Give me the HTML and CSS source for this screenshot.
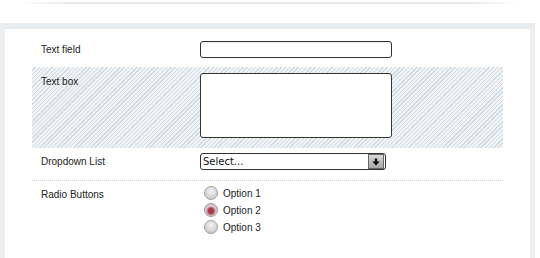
FILE: index.html
```html
<!DOCTYPE html>
<html>
<head>
<meta charset="utf-8">
<link rel="stylesheet" href="styles.css">
</head>
<body>
<div class="topline"></div>
<div class="panel">
  <form class="form">
    <div class="row row-first">
      <label class="lbl">Text field</label>
      <div class="ctl"><span class="input"></span></div>
    </div>
    <div class="row row-striped">
      <label class="lbl">Text box</label>
      <div class="ctl"><span class="textarea"></span></div>
    </div>
    <div class="row row-select">
      <label class="lbl">Dropdown List</label>
      <div class="ctl">
        <div class="select">
          <span class="select-text">Select...</span>
          <span class="select-btn">
            <svg width="10" height="10" viewBox="0 0 10 10"><path d="M3.8 1.5h2.4v3h2.6l-3.8 4l-3.8-4h2.6z" fill="#111"/></svg>
          </span>
        </div>
      </div>
    </div>
    <div class="row row-radio">
      <label class="lbl">Radio Buttons</label>
      <div class="ctl radios">
        <div class="opt"><span class="radio"></span><span>Option 1</span></div>
        <div class="opt"><span class="radio checked"></span><span>Option 2</span></div>
        <div class="opt"><span class="radio"></span><span>Option 3</span></div>
      </div>
    </div>
  </form>
</div>
</body>
</html>
```
FILE: styles.css
```css
html, body {
  margin: 0;
  padding: 0;
  background: #fff;
  font-family: "Liberation Sans", Arial, sans-serif;
  color: #222;
  overflow: hidden;
}
.topline {
  height: 2px;
  margin: 2px 20px 0 20px;
  background: linear-gradient(to right, rgba(230,232,235,0), #e6e8eb 10%, #e6e8eb 90%, rgba(230,232,235,0));
}
.panel {
  margin-top: 19px;
  width: 525px;
  height: 223px;
  border-style: solid;
  border-color: #e8ecef #edf0f2 #edf0f2 #edf0f2;
  border-width: 6px 5px 6px 5px;
  background: #fff;
  padding-top: 6px;
}
.form {
  margin-left: 27px;
  width: 471px;
}
.row {
  display: grid;
  grid-template-columns: 159px 1fr;
  padding: 6px 9px 10px 9px;
}
.row-first {
  padding-bottom: 9px;
}
.row-striped {
  background: repeating-linear-gradient(135deg, #f0f2f5 0 2px, #d5dbe2 2px 3px);
}
.row-select {
  padding-top: 5px;
  border-bottom: 1px dotted #cfd3d8;
}
.row-radio {
  padding-top: 5px;
}
.lbl {
  font-size: 10px;
  line-height: 13px;
  padding-top: 2px;
  color: #222;
}
.input {
  display: block;
  width: 190px;
  height: 15px;
  border: 1px solid #333;
  border-radius: 3px;
  background: #fff;
  box-shadow: inset 0 1px 1px rgba(0,0,0,0.08);
}
.textarea {
  display: block;
  width: 190px;
  height: 63px;
  border: 1px solid #333;
  border-radius: 3px;
  background: #fff;
}
.select {
  display: flex;
  align-items: center;
  justify-content: space-between;
  width: 184px;
  height: 15px;
  border: 1px solid #333;
  border-radius: 3px;
  background: #fff;
}
.select-text {
  font-family: "DejaVu Sans", Verdana, sans-serif;
  font-size: 10px;
  line-height: 15px;
  color: #111;
  padding-left: 2px;
}
.select-btn {
  display: flex;
  align-items: center;
  justify-content: center;
  width: 14px;
  height: 13px;
  margin-right: 1px;
  border: 1px solid #666;
  background: linear-gradient(#dadada, #a8a8a8);
}
.radios {
  display: flex;
  flex-direction: column;
  gap: 3px;
  padding-left: 4px;
}
.opt {
  display: flex;
  align-items: center;
  gap: 5px;
  height: 14px;
  font-size: 10px;
  color: #222;
}
.radio {
  width: 12px;
  height: 12px;
  border: 1px solid #a0a0a0;
  border-radius: 50%;
  background: radial-gradient(circle at 50% 35%, #f4f4f4 0, #dcdcdc 45%, #b9b9b9 100%);
}
.radio.checked {
  background: radial-gradient(circle at 50% 58%, #a8384a 0 2.5px, #c98a95 4px, #d8d0d2 5px, #bcbcbc 100%);
  border-color: #a09496;
}
```
